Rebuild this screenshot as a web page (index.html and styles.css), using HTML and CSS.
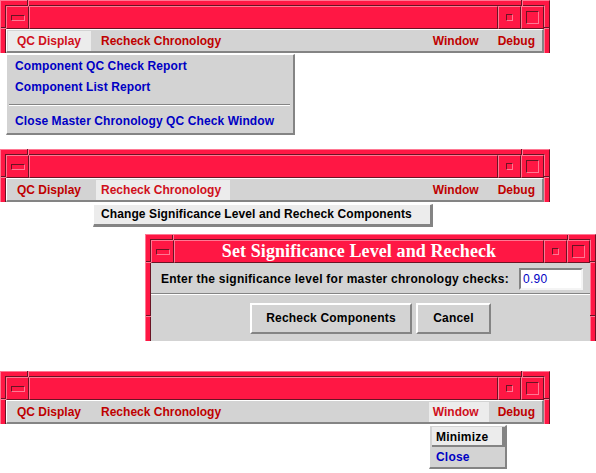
FILE: index.html
```html
<!DOCTYPE html>
<html>
<head>
<meta charset="utf-8">
<link rel="stylesheet" href="styles.css">
</head>
<body>
<div class="page">

  <div class="mwm w1">
    <i class="mk mk-tv mk-l"></i><i class="mk mk-tv mk-r"></i>
    <i class="mk mk-sh mk-sl"></i><i class="mk mk-sh mk-sr"></i>
    <div class="mwm-in">
      <div class="tbar">
        <div class="tb tb-menu"><span class="ico-menu"></span></div>
        <div class="ttl"></div>
        <div class="tb tb-min"><span class="ico-min"></span></div>
        <div class="tb tb-max"><span class="ico-max"></span></div>
      </div>
      <div class="mbar">
        <span class="mi mi-qc on">QC Display</span>
        <span class="mi mi-rc">Recheck Chronology</span>
        <span class="mi mi-win">Window</span>
        <span class="mi mi-dbg">Debug</span>
      </div>
    </div>
  </div>
  <div class="pull pull1">
    <div class="pi">Component QC Check Report</div>
    <div class="pi">Component List Report</div>
    <div class="psep"></div>
    <div class="pi">Close Master Chronology QC Check Window</div>
  </div>

  <div class="mwm w2">
    <i class="mk mk-tv mk-l"></i><i class="mk mk-tv mk-r"></i>
    <i class="mk mk-sh mk-sl"></i><i class="mk mk-sh mk-sr"></i>
    <div class="mwm-in">
      <div class="tbar">
        <div class="tb tb-menu"><span class="ico-menu"></span></div>
        <div class="ttl"></div>
        <div class="tb tb-min"><span class="ico-min"></span></div>
        <div class="tb tb-max"><span class="ico-max"></span></div>
      </div>
      <div class="mbar">
        <span class="mi mi-qc">QC Display</span>
        <span class="mi mi-rc on">Recheck Chronology</span>
        <span class="mi mi-win">Window</span>
        <span class="mi mi-dbg">Debug</span>
      </div>
    </div>
  </div>
  <div class="pull pull2">
    <div class="pi pi-on">Change Significance Level and Recheck Components</div>
  </div>

  <div class="mwm dlg">
    <i class="mk mk-tv mk-l"></i><i class="mk mk-tv mk-r"></i>
    <i class="mk mk-sh mk-sl"></i><i class="mk mk-sh mk-sr"></i>
    <i class="mk mk-sh mk-sl mk-low"></i><i class="mk mk-sh mk-sr mk-low"></i>
    <div class="mwm-in">
      <div class="tbar">
        <div class="tb tb-menu"><span class="ico-menu"></span></div>
        <div class="ttl">Set Significance Level and Recheck</div>
        <div class="tb tb-min"><span class="ico-min"></span></div>
        <div class="tb tb-max"><span class="ico-max"></span></div>
      </div>
      <div class="dbody">
        <div class="drow">
          <span class="dlabel">Enter the significance level for master chronology checks:</span>
          <span class="dinput">0.90</span>
        </div>
        <div class="dsep"></div>
        <div class="dbtns">
          <span class="btn btn-rc">Recheck Components</span>
          <span class="btn btn-cn">Cancel</span>
        </div>
      </div>
    </div>
  </div>

  <div class="mwm w3">
    <i class="mk mk-tv mk-l"></i><i class="mk mk-tv mk-r"></i>
    <i class="mk mk-sh mk-sl"></i><i class="mk mk-sh mk-sr"></i>
    <div class="mwm-in">
      <div class="tbar">
        <div class="tb tb-menu"><span class="ico-menu"></span></div>
        <div class="ttl"></div>
        <div class="tb tb-min"><span class="ico-min"></span></div>
        <div class="tb tb-max"><span class="ico-max"></span></div>
      </div>
      <div class="mbar">
        <span class="mi mi-qc">QC Display</span>
        <span class="mi mi-rc">Recheck Chronology</span>
        <span class="mi mi-win on">Window</span>
        <span class="mi mi-dbg">Debug</span>
      </div>
    </div>
  </div>
  <div class="pull pull3">
    <div class="pi pi-raised">Minimize</div>
    <div class="pi pi-close">Close</div>
  </div>

</div>
</body>
</html>
```

FILE: styles.css
```css
:root {
  --red: #ff1744;
  --lt: #ff7893;
  --dk: #6a1424;
  --gray: #d3d3d3;
  --hi: #ececec;
  --sh: #848484;
}
* { box-sizing: border-box; }
html, body { margin: 0; padding: 0; background: #fff; }
body {
  width: 596px;
  height: 473px;
  overflow: hidden;
  font-family: "Liberation Sans", Arial, sans-serif;
  font-size: 12px;
  font-weight: bold;
}
.page { display: flex; flex-direction: column; align-items: flex-start; }

/* ---------- window frame ---------- */
.mwm {
  position: relative;
  background: var(--red);
  border-top: 1px solid var(--lt);
  border-left: 1px solid var(--lt);
  border-right: 1px solid var(--dk);
  padding: 4px 4px 0 4px;
}
.mwm-in {
  border-top: 1px solid var(--dk);
  border-left: 1px solid var(--dk);
  border-right: 1px solid var(--lt);
}
.mk { position: absolute; display: block; }
.mk-tv { top: -1px; width: 2px; height: 6px; border-left: 1px solid var(--dk); background: var(--lt); }
.mk-tv.mk-l { left: 26px; }
.mk-tv.mk-r { right: 26px; }
.mk-sh { top: 26px; height: 2px; width: 5px; border-top: 1px solid var(--dk); background: var(--lt); }
.mk-sh.mk-sl { left: 0; }
.mk-sh.mk-sr { right: 0; }
.mk-sh.mk-low { top: 80px; }

.tbar { display: flex; height: 23px; }
.tb, .ttl {
  border: 1px solid;
  border-color: var(--lt) var(--dk) var(--dk) var(--lt);
  background: var(--red);
}
.tb { width: 23px; flex: none; display: flex; align-items: center; justify-content: center; }
.ttl { flex: 1; }
.ico-menu {
  display: block; width: 14px; height: 6px;
  border: 1px solid; border-color: var(--dk) var(--lt) var(--lt) var(--dk);
}
.ico-min {
  display: block; width: 7px; height: 7px;
  border: 1px solid; border-color: var(--dk) var(--lt) var(--lt) var(--dk);
}
.ico-max {
  display: block; width: 13px; height: 13px;
  border: 1px solid; border-color: var(--dk) var(--lt) var(--lt) var(--dk);
}

/* ---------- menubar ---------- */
.mbar {
  display: flex;
  height: 24px;
  background: var(--gray);
  border-top: 1px solid #fff;
  border-left: 1px solid #fff;
  border-bottom: 2px solid var(--sh);
  border-right: 2px solid var(--sh);
  padding: 1px 1px 0 1px;
  color: #bf0000;
}
.mi { display: block; height: 20px; line-height: 20px; white-space: nowrap; }
.mi.on { background: var(--hi); color: #d0101c; }
.mi-qc { padding: 0 10px 0 9px; }
.mi-rc { margin-left: 5px; padding: 0 9px 0 5px; }
.mi-win { margin-left: auto; padding: 0 10px 0 4px; }
.mi-dbg { padding: 0 6px 0 9px; }

/* ---------- pulldowns ---------- */
.pull {
  background: var(--gray);
  border: 1px solid #fff;
  border-right: 2px solid var(--sh);
  border-bottom: 2px solid var(--sh);
  color: #0000c4;
  letter-spacing: 0.1px;
}
.pi { height: 21px; line-height: 21px; padding-left: 7px; white-space: nowrap; }
.pull1 { margin: 1px 0 0 6px; width: 289px; padding: 1px 1px; }
.pull1 .pi { padding-left: 7px; }
.psep { margin: 6px 2px 5px 1px; border-top: 1px solid var(--sh); border-bottom: 1px solid #fff; }

.w1 { width: 550px; }
.w2 { width: 550px; margin-top: 14px; }
.w3 { width: 550px; margin-top: 30px; }

.pull2 {
  margin: 2px 0 0 93px;
  width: 340px;
  border-width: 1px 3px 3px 1px;
  color: #000;
  background: var(--hi);
}
.pull2 .pi { padding-left: 7px; height: 19px; line-height: 19px; }

.pull3 {
  margin: 1px 0 0 429px;
  width: 78px;
  padding: 1px 0 0 1px;
  letter-spacing: 0.2px;
}
.pull3 .pi { padding-left: 5px; height: 20px; line-height: 20px; }
.pull3 .pi-raised { padding-left: 4px; }
.pi-raised {
  background: var(--hi); color: #000;
  border-right: 3px solid var(--sh); border-bottom: 2px solid var(--sh);
  margin-left: 1px;
}

/* ---------- dialog ---------- */
.dlg {
  width: 451px;
  height: 107px;
  margin: 7px 0 0 145px;
  overflow: hidden;
}
.dlg .ttl {
  color: #fff;
  font-family: "Liberation Serif", "Times New Roman", serif;
  font-size: 18px;
  font-weight: bold;
  text-align: center;
  line-height: 20px;
  letter-spacing: 0.1px;
}
.dbody { background: var(--gray); height: 120px; }
.drow { display: flex; align-items: center; height: 29px; padding: 2px 7px 0 10px; color: #000; }
.dlabel { flex: 1; letter-spacing: 0.25px; }
.dinput {
  width: 64px; height: 22px;
  background: #fff;
  border: 2px solid; border-color: var(--sh) #f4f4f4 #f4f4f4 var(--sh);
  font-weight: normal; color: #0000c4;
  padding-left: 2px; line-height: 18px;
  letter-spacing: 0.3px;
}
.dsep { margin-top: 1px; border-top: 1px solid var(--sh); border-bottom: 1px solid #fff; }
.dbtns { display: flex; justify-content: center; gap: 4px; padding-top: 8px; color: #000; }
.btn {
  height: 31px; line-height: 27px; text-align: center;
  border: 2px solid; border-color: #fff var(--sh) var(--sh) #fff;
  background: var(--gray);
  letter-spacing: 0.2px;
}
.btn-rc { width: 162px; }
.btn-cn { width: 75px; }
```
